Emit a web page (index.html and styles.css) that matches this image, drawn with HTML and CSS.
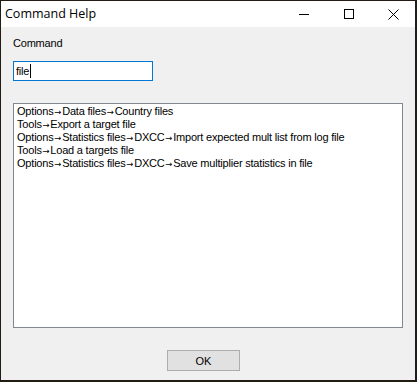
FILE: index.html
```html
<!DOCTYPE html>
<html>
<head>
<meta charset="utf-8">
<link rel="stylesheet" href="styles.css">
</head>
<body>
<div class="window">
  <div class="titlebar">
    <span class="title">Command Help</span>
    <div class="controls">
      <span class="ctl"><svg width="10" height="10" viewBox="0 0 10 10"><path d="M0 5.5H10" stroke="#000" stroke-width="1"/></svg></span>
      <span class="ctl"><svg width="10" height="10" viewBox="0 0 10 10"><rect x="0.5" y="0.5" width="9" height="9" fill="none" stroke="#000" stroke-width="1"/></svg></span>
      <span class="ctl close"><svg width="11" height="11" viewBox="0 0 11 11"><path d="M0.5 0.5L10.5 10.5M10.5 0.5L0.5 10.5" stroke="#000" stroke-width="1"/></svg></span>
    </div>
  </div>
  <div class="content">
    <div class="label">Command</div>
    <div class="field"><span class="value">file</span><span class="caret"></span></div>
    <div class="list">
      <div class="item">Options<span class="arr">→</span>Data files<span class="arr">→</span>Country files</div>
      <div class="item">Tools<span class="arr">→</span>Export a target file</div>
      <div class="item">Options<span class="arr">→</span>Statistics files<span class="arr">→</span>DXCC<span class="arr">→</span>Import expected mult list from log file</div>
      <div class="item">Tools<span class="arr">→</span>Load a targets file</div>
      <div class="item">Options<span class="arr">→</span>Statistics files<span class="arr">→</span>DXCC<span class="arr">→</span>Save multiplier statistics in file</div>
    </div>
    <div class="footer"><div class="button">OK</div></div>
  </div>
</div>
</body>
</html>
```
FILE: styles.css
```css
html, body {
  margin: 0;
  padding: 0;
}
body {
  width: 417px;
  height: 382px;
  background: #231c15;
  overflow: hidden;
}
.window {
  margin: 1px 2px 2px 1px;
  width: 414px;
  height: 379px;
  background: #f0f0f0;
  display: flex;
  flex-direction: column;
  font-family: "Liberation Sans", Arial, sans-serif;
  font-size: 11px;
  letter-spacing: -0.2px;
  color: #000;
}
.titlebar {
  height: 26px;
  background: #fff;
  display: flex;
  align-items: center;
  justify-content: space-between;
  letter-spacing: 0;
}
.title {
  font-family: "Open Sans", "Noto Sans", sans-serif;
  font-size: 12.5px;
  padding-left: 4px;
  padding-bottom: 1px;
}
.controls {
  display: flex;
  height: 26px;
  margin-right: -1px;
}
.ctl {
  width: 45px;
  display: flex;
  align-items: center;
  justify-content: center;
}
.ctl svg {
  display: block;
}
.content {
  flex: 1;
  padding: 10px 12px 0 12px;
  display: flex;
  flex-direction: column;
}
.label {
  line-height: 13px;
  height: 13px;
}
.field {
  margin-top: 11px;
  width: 136px;
  height: 18px;
  border: 1px solid #0078d7;
  background: #fff;
  display: flex;
  align-items: center;
  padding-left: 2px;
  line-height: 13px;
}
.caret {
  display: inline-block;
  width: 1px;
  height: 14px;
  background: #000;
  margin-left: 1px;
}
.list {
  margin-top: 22px;
  width: 388px;
  height: 222px;
  border: 1px solid #828790;
  background: #fff;
  padding: 1px 0 0 0;
}
.item {
  line-height: 13px;
  height: 13px;
  padding-left: 3px;
  white-space: nowrap;
}
.arr {
  font-family: "DejaVu Sans", sans-serif;
  font-size: 8.5px;
  letter-spacing: 0;
  margin: 0 1px 0 0.5px;
  position: relative;
  top: -0.5px;
}
.footer {
  display: flex;
  padding-left: 154px;
  margin-top: 22px;
}
.button {
  width: 71px;
  height: 19px;
  border: 1px solid #adadad;
  background: #e1e1e1;
  display: flex;
  align-items: center;
  justify-content: center;
  font-size: 11px;
  letter-spacing: 0;
}
```
